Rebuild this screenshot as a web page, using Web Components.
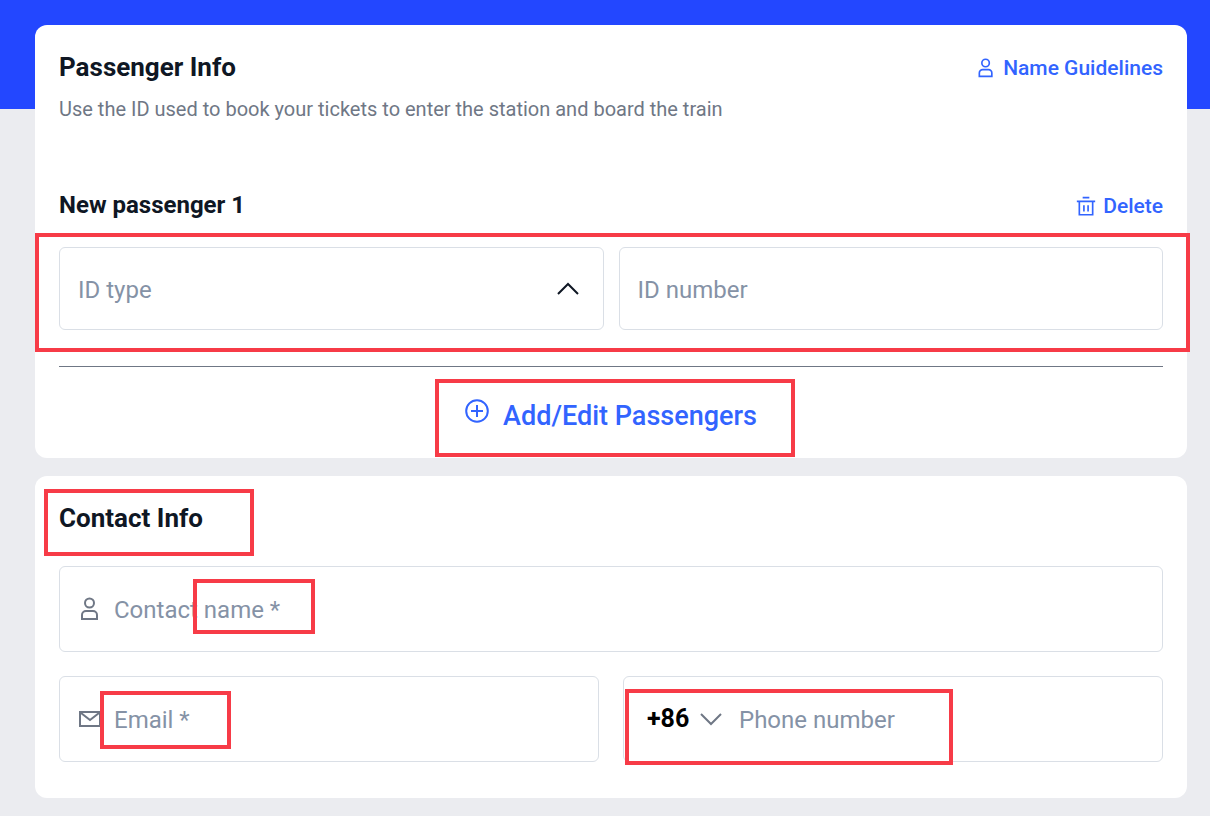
<!DOCTYPE html>
<html lang="en">
<head>
<meta charset="utf-8">
<title>Passenger Info</title>
<style>
    :root {
        --blue: #2347ff;
        --link: #3264ff;
        --ink: #0f1724;
        --muted: #6f7785;
        --hint: #8592a6;
        --line: #dadfe6;
        --mark: #f73b47;
    }
    body {
        margin: 0;
        min-height: 100vh;
        box-sizing: border-box;
        background: linear-gradient(var(--blue) 109px, #ebecf0 109px);
        font-family: Roboto, "Liberation Sans", sans-serif;
        color: var(--ink);
    }
</style>
</head>
<body>
<booking-page></booking-page>

<script>
const icons = {
    user: '<circle cx="11.500" cy="6" r="4.500"/><path d="M4 22v-4a4 4 0 0 1 4-4h7a4 4 0 0 1 4 4v4z"/>',
    trash: '<path d="M8 2h8M1 6.500h22M4 6.500V22.500h16V6.500M9.500 11v7.500M14.500 11v7.500"/>',
    plus: '<circle cx="12" cy="13" r="10.800"/><path d="M12 7v12M6 13h12"/>',
    mail: '<path d="M2 5h20v14H2zM3 6l9 7 9-7"/>',
    up: '<path d="M2 17L12 7l10 10"/>',
    down: '<path d="M2 7l10 10L22 7"/>'
};

// every element here renders once into an open shadow root
class BaseElement extends HTMLElement {
    connectedCallback() {
        if (this.shadowRoot) return;
        this.attachShadow({ mode: 'open' });
        this.shadowRoot.innerHTML = this.render();
    }

    attr(name) {
        return this.getAttribute(name) || '';
    }
}

class UiIcon extends BaseElement {
    render() {
        return `
        <style>
            :host { display: block; flex: none; width: 24px; height: 24px; }
            :host([small]) { width: 20px; height: 20px; }
            svg { display: block; width: 100%; height: 100%; overflow: visible; fill: none; stroke: currentColor; stroke-width: 2; }
        </style>
        <svg viewBox="0 0 24 24" aria-hidden="true">${icons[this.attr('name')]}</svg>`;
    }
}

class InfoCard extends BaseElement {
    render() {
        return `
        <style>
            :host { display: block; background: #fff; border-radius: 12px; padding: 24px; }
        </style>
        <slot></slot>`;
    }
}

class TextLink extends BaseElement {
    render() {
        return `
        <style>
            :host { display: block; padding-top: 2px; }
            a, button {
                display: flex; align-items: center; gap: 7px;
                padding: 0; border: 0; background: none; cursor: pointer;
                font: 500 21px/30px Roboto, "Liberation Sans", sans-serif;
                color: var(--link); text-decoration: none;
            }
        </style>
        ${this.hasAttribute('href')
            ? `<a href="${this.attr('href')}"><ui-icon small name="${this.attr('icon')}"></ui-icon><slot></slot></a>`
            : `<button type="button"><ui-icon small name="${this.attr('icon')}"></ui-icon><slot></slot></button>`}`;
    }
}

class AddButton extends BaseElement {
    render() {
        return `
        <style>
            :host { display: block; }
            button {
                display: flex; gap: 14px; padding: 0; border: 0; background: none; cursor: pointer;
                font: 500 27px/36px Roboto, "Liberation Sans", sans-serif;
                color: var(--link);
            }
        </style>
        <button type="button"><ui-icon name="plus"></ui-icon><slot></slot></button>`;
    }
}

class FormField extends BaseElement {
    render() {
        return `
        <style>
            :host {
                display: flex; align-items: center; gap: 12px;
                box-sizing: border-box; min-width: 0; height: 86px; padding: 0 18px;
                border: 1px solid var(--line); border-radius: 6px; background: #fff;
                color: var(--muted);
            }
            :host([compact]) { height: 83px; }
            :host([wide]) { padding: 0 23px; gap: 16px; }
            input {
                flex: 1; min-width: 0; padding: 2px 0 0; border: 0; outline: 0; background: none;
                font: 400 24px/36px Roboto, "Liberation Sans", sans-serif; color: var(--ink);
            }
            input::placeholder { color: var(--hint); opacity: 1; }
        </style>
        <slot></slot>
        <input type="${this.attr('type') || 'text'}" placeholder="${this.attr('label')}" aria-label="${this.attr('label')}">`;
    }
}

class SelectField extends BaseElement {
    render() {
        return `
        <style>
            :host {
                display: flex; align-items: center;
                box-sizing: border-box; min-width: 0; height: 83px; padding: 0 23px 0 18px;
                border: 1px solid var(--line); border-radius: 6px; background: #fff;
            }
            select {
                flex: 1; min-width: 0; appearance: none; padding: 2px 0 0; border: 0; outline: 0; background: none;
                font: 400 24px/36px Roboto, "Liberation Sans", sans-serif; color: var(--hint);
            }
        </style>
        <select aria-label="${this.attr('label')}"><option>${this.attr('label')}</option></select>
        <ui-icon name="up"></ui-icon>`;
    }
}

class DialCode extends BaseElement {
    render() {
        return `
        <style>
            :host { display: flex; align-items: center; gap: 9px; }
            select {
                appearance: none; padding: 0; border: 0; outline: 0; background: none;
                font: 700 25px/36px Roboto, "Liberation Sans", sans-serif; color: #000;
            }
        </style>
        <select aria-label="Country code"><option>${this.attr('value')}</option></select>
        <ui-icon name="down"></ui-icon>`;
    }
}

// red frame drawn over whatever block it is placed in
class MarkFrame extends BaseElement {
    render() {
        return `
        <style>
            :host {
                position: absolute; box-sizing: border-box;
                border: 4px solid var(--mark); pointer-events: none;
            }
        </style>`;
    }
}

class BookingPage extends BaseElement {
    render() {
        return `
        <style>
            :host { display: flex; flex-direction: column; gap: 18px; padding: 25px 23px 18px 35px; }
            h2, h3, p { margin: 0; }
            h2 { font-size: 26px; line-height: 36px; font-weight: 700; }
            h3 { font-size: 24px; line-height: 30px; font-weight: 700; }
            p { margin-top: 12px; font-size: 20px; line-height: 24px; color: var(--muted); }
            .bar { display: flex; justify-content: space-between; align-items: center; }
            .passenger { margin-top: 68px; }
            .row { display: grid; grid-template-columns: 1fr 1fr; gap: 24px; }
            .ids { gap: 15px; margin-top: 26px; }
            .marked { position: relative; }
            hr { margin: 36px 0 31px; border: 0; border-top: 1px solid var(--muted); }
            .add { display: flex; justify-content: center; }
            .contact { padding-bottom: 36px; }
            .fields { display: grid; gap: 24px; margin-top: 30px; }
            .m-ids { inset: -14px -27px -22px -24px; }
            .m-add { inset: -19px -38px -23px -30px; }
            .m-title { left: -15px; top: -11px; width: 210px; height: 67px; }
            .m-name { left: 134px; top: 13px; width: 122px; height: 55px; }
            .m-email { left: 41px; top: 15px; width: 131px; height: 58px; }
            .m-phone { left: 2px; top: 13px; width: 328px; height: 76px; }
        </style>
        <info-card>
            <div class="bar">
                <h2>Passenger Info</h2>
                <text-link href="#guidelines" icon="user">Name Guidelines</text-link>
            </div>
            <p>Use the ID used to book your tickets to enter the station and board the train</p>
            <div class="bar passenger">
                <h3>New passenger 1</h3>
                <text-link icon="trash">Delete</text-link>
            </div>
            <div class="row ids marked">
                <select-field label="ID type"></select-field>
                <form-field compact label="ID number"></form-field>
                <mark-frame class="m-ids"></mark-frame>
            </div>
            <hr>
            <div class="add">
                <div class="marked">
                    <add-button>Add/Edit Passengers</add-button>
                    <mark-frame class="m-add"></mark-frame>
                </div>
            </div>
        </info-card>
        <info-card class="contact">
            <div class="marked">
                <h2>Contact Info</h2>
                <mark-frame class="m-title"></mark-frame>
            </div>
            <div class="fields">
                <div class="marked">
                    <form-field label="Contact name *"><ui-icon name="user"></ui-icon></form-field>
                    <mark-frame class="m-name"></mark-frame>
                </div>
                <div class="row">
                    <div class="marked">
                        <form-field type="email" label="Email *"><ui-icon name="mail"></ui-icon></form-field>
                        <mark-frame class="m-email"></mark-frame>
                    </div>
                    <div class="marked">
                        <form-field wide type="tel" label="Phone number"><dial-code value="+86"></dial-code></form-field>
                        <mark-frame class="m-phone"></mark-frame>
                    </div>
                </div>
            </div>
        </info-card>`;
    }
}

customElements.define('ui-icon', UiIcon);
customElements.define('info-card', InfoCard);
customElements.define('text-link', TextLink);
customElements.define('add-button', AddButton);
customElements.define('form-field', FormField);
customElements.define('select-field', SelectField);
customElements.define('dial-code', DialCode);
customElements.define('mark-frame', MarkFrame);
customElements.define('booking-page', BookingPage);
</script>
</body>
</html>
